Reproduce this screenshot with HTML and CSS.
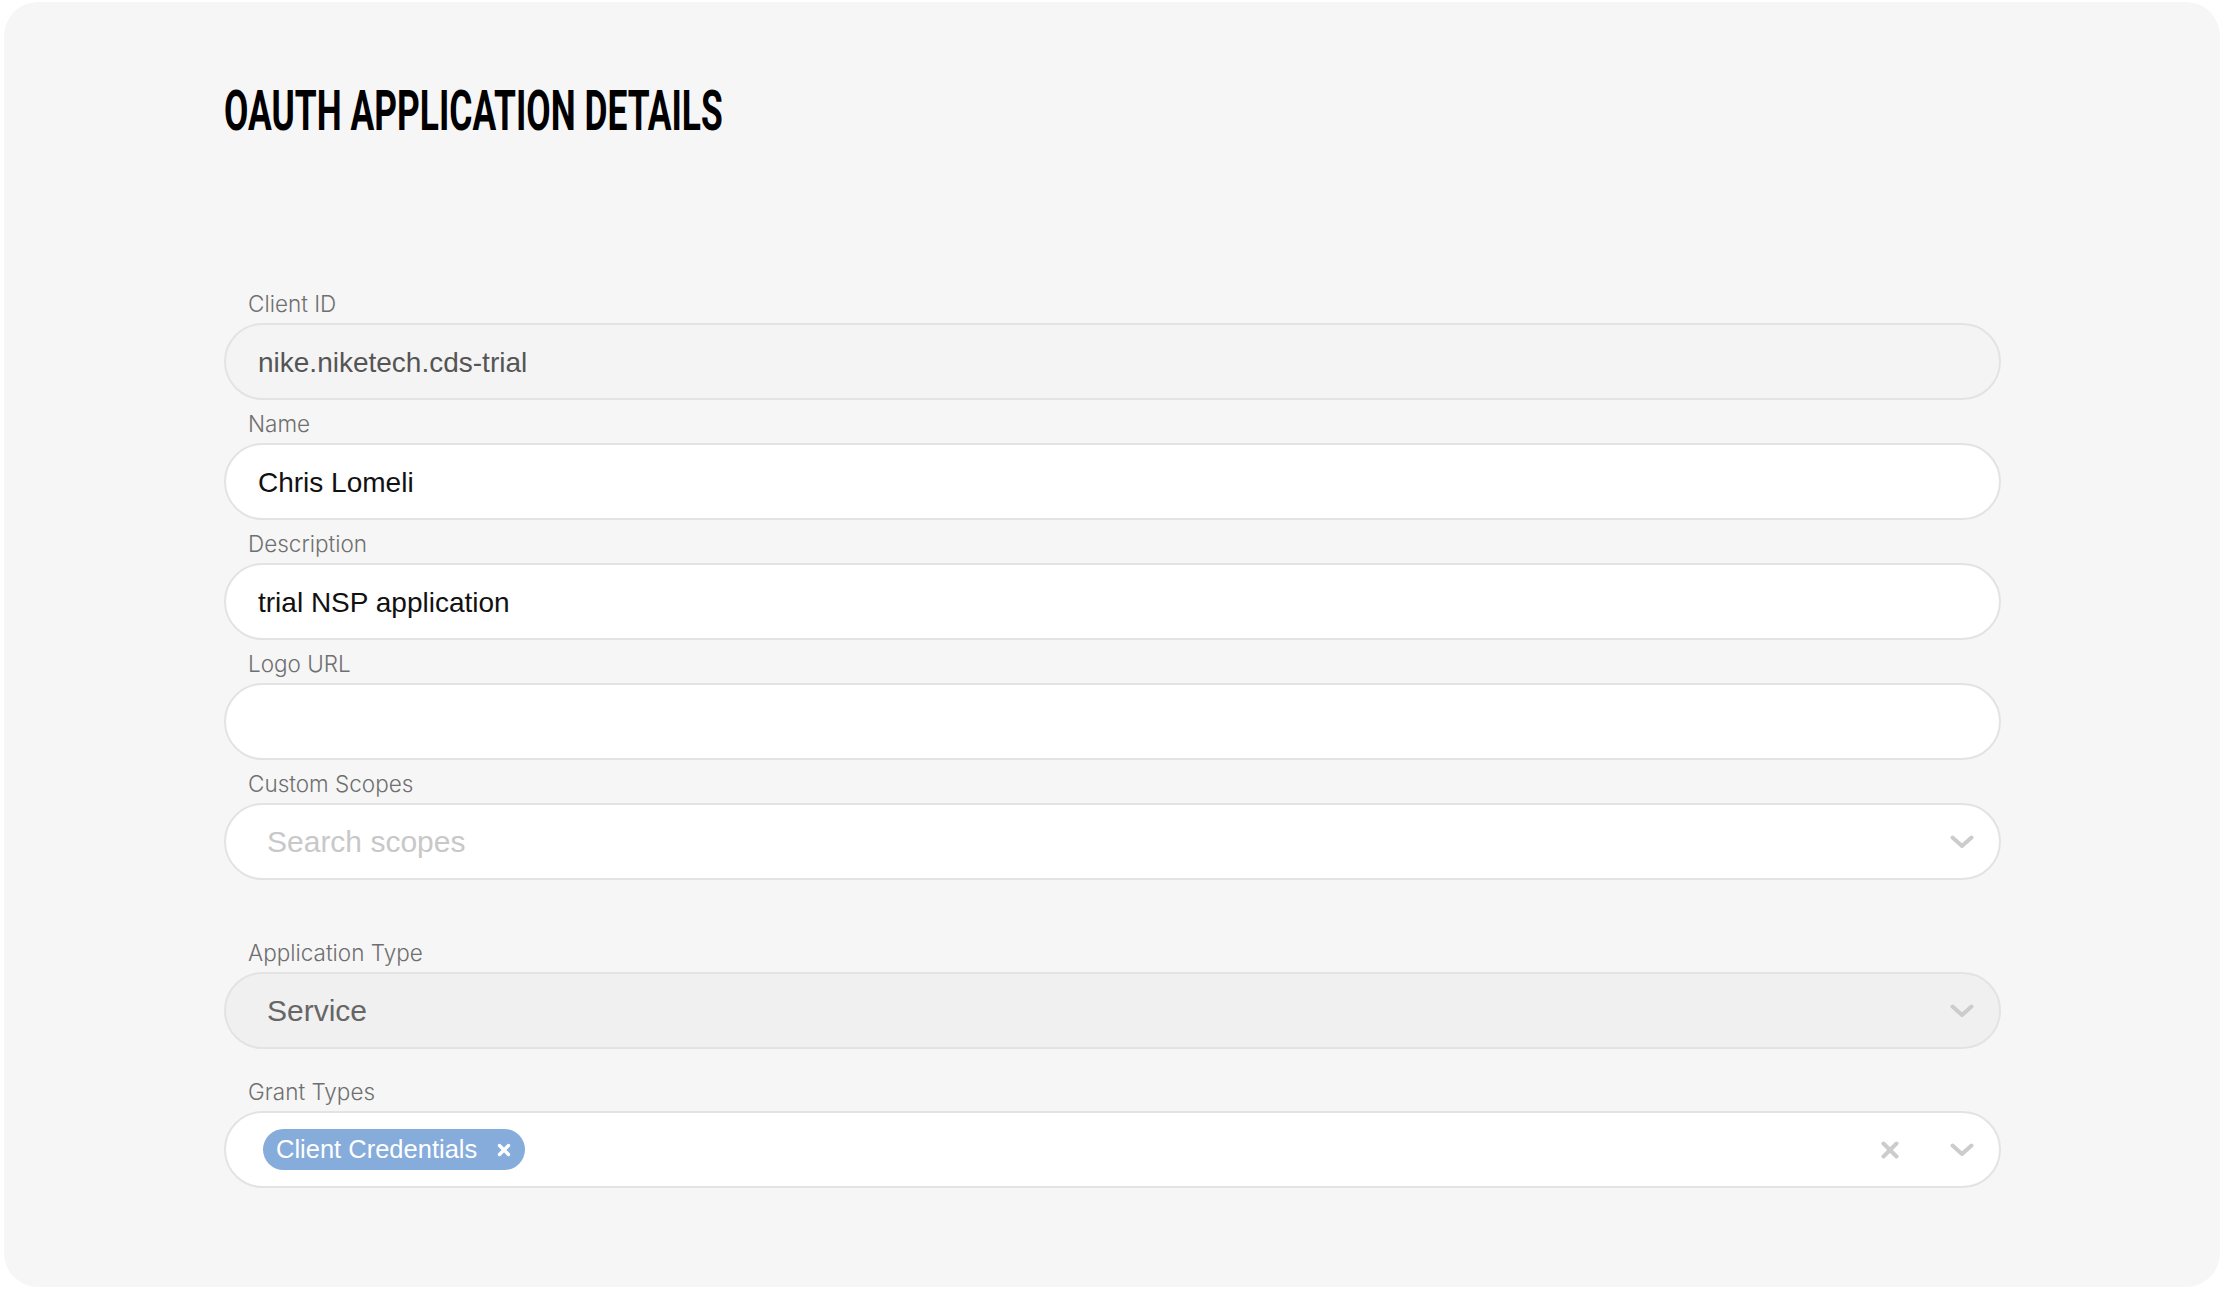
FILE: index.html
```html
<!DOCTYPE html>
<html lang="en">
<head>
<meta charset="utf-8">
<title>OAuth Application Details</title>
<link rel="stylesheet" href="styles.css">
</head>
<body>
<div class="page">
  <div class="card">
    <h1 class="title">OAUTH APPLICATION DETAILS</h1>
    <div class="form">
      <div class="field">
        <div class="label">Client ID</div>
        <div class="input input--disabled"><span class="value value--muted">nike.niketech.cds-trial</span></div>
      </div>
      <div class="field">
        <div class="label">Name</div>
        <div class="input"><span class="value">Chris Lomeli</span></div>
      </div>
      <div class="field">
        <div class="label">Description</div>
        <div class="input"><span class="value">trial NSP application</span></div>
      </div>
      <div class="field">
        <div class="label">Logo URL</div>
        <div class="input"></div>
      </div>
      <div class="field">
        <div class="label">Custom Scopes</div>
        <div class="input select">
          <span class="select-value placeholder">Search scopes</span>
          <svg class="chevron" width="24" height="14" viewBox="0 0 24 14"><path d="M2.5 2.5 L12 11 L21.5 2.5" fill="none" stroke="#cccccc" stroke-width="4" stroke-linecap="round" stroke-linejoin="round"/></svg>
        </div>
      </div>
      <div class="field field--section">
        <div class="label">Application Type</div>
        <div class="input select select--disabled">
          <span class="select-value">Service</span>
          <svg class="chevron" width="24" height="14" viewBox="0 0 24 14"><path d="M2.5 2.5 L12 11 L21.5 2.5" fill="none" stroke="#cccccc" stroke-width="4" stroke-linecap="round" stroke-linejoin="round"/></svg>
        </div>
      </div>
      <div class="field field--grant">
        <div class="label">Grant Types</div>
        <div class="input multi">
          <div class="multi-values">
            <span class="chip">Client Credentials
              <svg class="chip-x" width="14" height="14" viewBox="0 0 14 14"><path d="M2.5 2.5 L11.5 11.5 M11.5 2.5 L2.5 11.5" fill="none" stroke="#ffffff" stroke-width="3.4" stroke-linecap="round"/></svg>
            </span>
          </div>
          <svg class="clear" width="18" height="18" viewBox="0 0 18 18"><path d="M2.5 2.5 L15.5 15.5 M15.5 2.5 L2.5 15.5" fill="none" stroke="#cccccc" stroke-width="4" stroke-linecap="round"/></svg>
          <svg class="chevron" width="24" height="14" viewBox="0 0 24 14"><path d="M2.5 2.5 L12 11 L21.5 2.5" fill="none" stroke="#cccccc" stroke-width="4" stroke-linecap="round" stroke-linejoin="round"/></svg>
        </div>
      </div>
    </div>
  </div>
</div>
</body>
</html>
```

FILE: styles.css
```css
html, body {
  margin: 0;
  padding: 0;
  background: #ffffff;
}

.page {
  padding: 2px 4px 5px 4px;
}

.card {
  box-sizing: border-box;
  height: 1285px;
  background: #f6f6f6;
  border-radius: 34px;
  padding: 82px 219px 0 220px;
}

.title {
  margin: 0;
  width: max-content;
  font-family: Roboto, "Liberation Sans", sans-serif;
  font-weight: 700;
  font-size: 55px;
  line-height: 55px;
  color: #000000;
  white-space: nowrap;
  transform: scaleX(0.643);
  transform-origin: left center;
}

.form {
  margin-top: 152px;
  display: flex;
  flex-direction: column;
}

.field {
  display: flex;
  flex-direction: column;
  gap: 6px;
}

.field + .field {
  margin-top: 11px;
}

.field.field--section {
  margin-top: 60px;
}

.field.field--grant {
  margin-top: 30px;
}

.label {
  padding-left: 24px;
  font-family: Inter, Roboto, "Liberation Sans", sans-serif;
  font-weight: 300;
  font-size: 22.5px;
  line-height: 26px;
  color: #6f6f6f;
}

.input {
  box-sizing: border-box;
  height: 77px;
  border: 2px solid #e3e3e3;
  border-radius: 39px;
  background: #ffffff;
  display: flex;
  align-items: center;
  padding: 3px 25px 0 32px;
  font-family: "Liberation Sans", Arial, sans-serif;
  font-size: 28px;
  color: #111111;
}

.input--disabled {
  background: #f4f4f4;
}

.value--muted {
  color: #555555;
}

.select {
  padding-top: 0;
  padding-left: 41px;
  font-size: 30px;
}

.select-value {
  flex: 1;
}

.placeholder {
  color: #c8c8c8;
}

.select--disabled {
  background: #f0f0f0;
  color: #666666;
}

.chevron {
  flex: none;
  display: block;
}

.multi {
  padding-top: 0;
  padding-left: 37px;
}

.multi-values {
  flex: 1;
  display: flex;
  align-items: center;
}

.chip {
  display: inline-flex;
  align-items: center;
  gap: 20px;
  height: 41px;
  border-radius: 21px;
  background: #85acdb;
  color: #ffffff;
  font-size: 25.5px;
  padding: 0 14px 0 13px;
}

.chip-x {
  display: block;
}

.clear {
  flex: none;
  display: block;
  margin-right: 51px;
}
```
